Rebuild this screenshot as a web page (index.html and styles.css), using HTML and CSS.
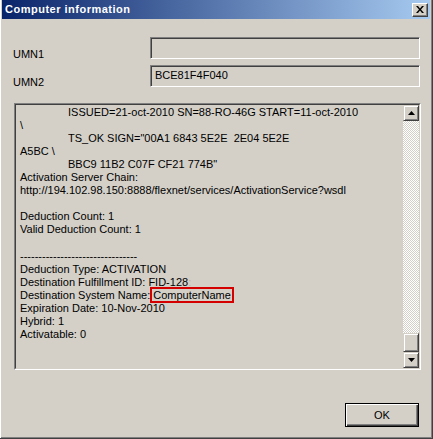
FILE: index.html
```html
<!DOCTYPE html>
<html lang="en">
  <head>
    <meta charset="UTF-8" />
    <meta name="viewport" content="width=device-width, initial-scale=1.0" />
    <title>Computer information</title>
    <link rel="stylesheet" href="styles.css">
  </head>
  <body>
    <div class="window">
      <div class="titlebar">
        <span class="title">Computer information</span>
        <button class="close" aria-label="Close">
          <svg width="8" height="7" viewBox="0 0 8 7">
            <path d="M0 0h2l2 2.5L6 0h2L5 3.5 8 7H6L4 4.5 2 7H0l3-3.5z" fill="#000" />
          </svg>
        </button>
      </div>

      <div class="content">
        <div class="form">
          <label class="lbl">UMN1</label>
          <div class="field"></div>
          <label class="lbl">UMN2</label>
          <div class="field">BCE81F4F040</div>
        </div>

        <div class="log">
          <div class="log-inner">
            <div class="log-text">
              <div class="ind">ISSUED=21-oct-2010 SN=88-RO-46G START=11-oct-2010</div>
              <div>\</div>
              <div class="ind">TS_OK SIGN="00A1 6843 5E2E&nbsp; 2E04 5E2E</div>
              <div>A5BC \</div>
              <div class="ind">BBC9 11B2 C07F CF21 774B"</div>
              <div>Activation Server Chain:</div>
              <div>http://194.102.98.150:8888/flexnet/services/ActivationService?wsdl</div>
              <div>&nbsp;</div>
              <div>Deduction Count: 1</div>
              <div>Valid Deduction Count: 1</div>
              <div>&nbsp;</div>
              <div>--------------------------------</div>
              <div>Deduction Type: ACTIVATION</div>
              <div>Destination Fulfillment ID: FID-128<span class="faded">:</span></div>
              <div>Destination System Name:<span class="hl">ComputerName</span></div>
              <div>Expiration Date: 10-Nov-2010</div>
              <div>Hybrid: 1</div>
              <div>Activatable: 0</div>
            </div>
            <div class="scrollbar">
              <div class="sb-btn">
                <svg width="7" height="4" viewBox="0 0 7 4"><path d="M3.5 0L7 4H0z" fill="#000" /></svg>
              </div>
              <div class="sb-track"></div>
              <div class="sb-thumb"></div>
              <div class="sb-btn">
                <svg width="7" height="4" viewBox="0 0 7 4"><path d="M0 0h7L3.5 4z" fill="#000" /></svg>
              </div>
            </div>
          </div>
        </div>

        <div class="actions">
          <button class="btn">OK</button>
        </div>
      </div>
    </div>
  </body>
</html>
```

FILE: styles.css
```css
* {
  margin: 0;
  padding: 0;
  box-sizing: border-box;
}
body {
  font-family: "Liberation Sans", Arial, sans-serif;
  font-size: 11px;
  color: #000;
  background: #d4d0c8;
}
.window {
  width: 433px;
  height: 439px;
  background: #d4d0c8;
  border-right: 1px solid #404040;
  border-bottom: 1px solid #404040;
  box-shadow: inset 1px 0 #fff, inset -1px -1px #808080;
  padding: 0 2px 2px 2px;
}
.titlebar {
  height: 19px;
  display: flex;
  align-items: center;
  justify-content: space-between;
  padding: 0 2px 0 3px;
  background: linear-gradient(to right, #0a246a, #a6caf0);
}
.title {
  color: #fff;
  font-weight: bold;
  letter-spacing: 0.5px;
  line-height: 19px;
}
.close {
  width: 16px;
  height: 14px;
  display: flex;
  align-items: center;
  justify-content: center;
  background: #d4d0c8;
  border: 1px solid;
  border-color: #fff #404040 #404040 #fff;
  box-shadow: inset -1px -1px #808080;
}
.content {
  padding: 18px 10px 0 11px;
}
.form {
  display: grid;
  grid-template-columns: 137px 270px;
  grid-template-rows: 22px 22px;
  row-gap: 6px;
}
.lbl {
  align-self: end;
  line-height: 13px;
  margin-bottom: -2px;
}
.field {
  height: 22px;
  border: 1px solid;
  border-color: #808080 #fff #fff #808080;
  box-shadow: inset 1px 1px #404040, inset -1px -1px #d4d0c8;
  padding: 3px 4px 0;
  line-height: 13px;
}
.log {
  width: 407px;
  height: 267px;
  margin: 16px 0 0 1px;
  border: 1px solid;
  border-color: #808080 #fff #fff #808080;
}
.log-inner {
  height: 100%;
  display: flex;
  border: 1px solid;
  border-color: #404040 #d4d0c8 #d4d0c8 #404040;
}
.log-text {
  flex: 1;
  padding: 1px 0 0 4px;
  line-height: 13.05px;
  white-space: nowrap;
  overflow: hidden;
}
.ind {
  padding-left: 48px;
}
.faded {
  color: #b8b4ac;
}
.hl {
  border: 2px solid #d40000;
  padding: 0 1px;
}
.scrollbar {
  width: 16px;
  display: flex;
  flex-direction: column;
}
.sb-btn,
.sb-thumb {
  height: 16px;
  display: flex;
  align-items: center;
  justify-content: center;
  background: #d4d0c8;
  border: 1px solid;
  border-color: #d4d0c8 #404040 #404040 #d4d0c8;
  box-shadow: inset 1px 1px #fff, inset -1px -1px #808080;
}
.sb-thumb {
  height: 19px;
}
.sb-track {
  flex: 1;
  background: repeating-conic-gradient(#fff 0 25%, #d4d0c8 0 50%) 0 0 / 2px 2px;
}
.actions {
  display: flex;
  justify-content: flex-end;
  margin: 33px 1px 0 0;
}
.btn {
  width: 74px;
  height: 24px;
  font-family: "Liberation Sans", Arial, sans-serif;
  font-size: 11px;
  color: #000;
  background: #d4d0c8;
  border: 1px solid #000;
  box-shadow: inset 1px 1px #fff, inset -1px -1px #404040, inset -2px -2px #808080;
}
```
